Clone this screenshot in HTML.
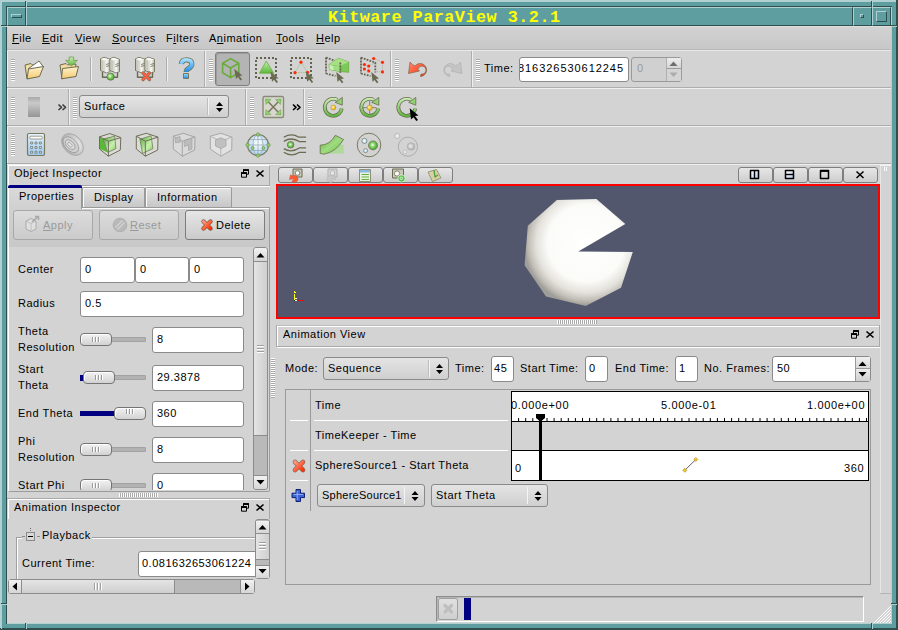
<!DOCTYPE html>
<html><head><meta charset="utf-8">
<style>
*{box-sizing:border-box;margin:0;padding:0}
html,body{width:898px;height:630px;overflow:hidden;background:#5f9ea0}
body{position:relative;font-family:"Liberation Sans",sans-serif;font-size:11px;letter-spacing:0.5px;color:#000}
.a{position:absolute}
.t{position:absolute;white-space:nowrap;line-height:14px}
/* generic bevels */
.lt{background:#b0d0d1}
.dk{background:#2f4f4f}
.g{background:#d3d3d3}
.hd{position:absolute;width:4px;background:repeating-linear-gradient(to bottom,#a9a9a9 0,#a9a9a9 1px,#fff 1px,#fff 2px)}
.vs{position:absolute;width:1px;background:#b5b5b5}
.edit{position:absolute;background:#fff;border:1px solid #8a8a8a;border-radius:3px}
.btn{position:absolute;border:1px solid #8a8a8a;border-radius:3px;background:linear-gradient(#e6e6e6,#cdcdcd)}
.combo{position:absolute;border:1px solid #8a8a8a;border-radius:3px;background:linear-gradient(#e4e4e4,#cfcfcf)}
</style></head><body>
<!-- ===== window frame ===== -->
<div class="a lt" style="left:0;top:0;width:898px;height:2px"></div>
<div class="a lt" style="left:0;top:0;width:2px;height:630px"></div>
<div class="a dk" style="left:896px;top:0;width:2px;height:630px"></div>
<div class="a dk" style="left:0;top:628px;width:898px;height:2px"></div>
<div class="a lt" style="left:1px;top:628px;width:1px;height:1px"></div>
<!-- inner bevel -->
<div class="a dk" style="left:6px;top:6px;width:886px;height:1px"></div>
<div class="a dk" style="left:6px;top:6px;width:1px;height:618px"></div>
<div class="a lt" style="left:891px;top:7px;width:1px;height:617px"></div>
<div class="a lt" style="left:7px;top:623px;width:885px;height:1px"></div>
<!-- corner notches -->
<div class="a dk" style="left:25px;top:1px;width:1px;height:6px"></div><div class="a lt" style="left:26px;top:1px;width:1px;height:6px"></div>
<div class="a dk" style="left:871px;top:1px;width:1px;height:6px"></div><div class="a lt" style="left:872px;top:1px;width:1px;height:6px"></div>
<div class="a dk" style="left:1px;top:25px;width:6px;height:1px"></div><div class="a lt" style="left:1px;top:26px;width:6px;height:1px"></div>
<div class="a dk" style="left:891px;top:25px;width:6px;height:1px"></div><div class="a lt" style="left:891px;top:26px;width:6px;height:1px"></div>
<div class="a dk" style="left:1px;top:603px;width:6px;height:1px"></div><div class="a lt" style="left:1px;top:604px;width:6px;height:1px"></div>
<div class="a dk" style="left:891px;top:603px;width:6px;height:1px"></div><div class="a lt" style="left:891px;top:604px;width:6px;height:1px"></div>
<div class="a dk" style="left:25px;top:623px;width:1px;height:6px"></div><div class="a lt" style="left:26px;top:623px;width:1px;height:6px"></div>
<div class="a dk" style="left:871px;top:623px;width:1px;height:6px"></div><div class="a lt" style="left:872px;top:623px;width:1px;height:6px"></div>
<!-- title bar -->
<div class="a" style="left:7px;top:7px;width:19px;height:19px;border-top:1px solid #b0d0d1;border-left:1px solid #b0d0d1;border-right:1px solid #2f4f4f;border-bottom:1px solid #2f4f4f"></div>
<div class="a" style="left:11px;top:14px;width:11px;height:4px;border-top:1px solid #b0d0d1;border-left:1px solid #b0d0d1;border-right:1px solid #2f4f4f;border-bottom:1px solid #2f4f4f"></div>
<div class="a" style="left:26px;top:7px;width:827px;height:19px;border-top:1px solid #b0d0d1;border-left:1px solid #b0d0d1;border-right:1px solid #2f4f4f;border-bottom:1px solid #2f4f4f"></div>
<div class="a" style="left:853px;top:7px;width:19px;height:19px;border-top:1px solid #b0d0d1;border-left:1px solid #b0d0d1;border-right:1px solid #2f4f4f;border-bottom:1px solid #2f4f4f"></div>
<div class="a" style="left:860px;top:14px;width:4px;height:4px;border-top:1px solid #b0d0d1;border-left:1px solid #b0d0d1;border-right:1px solid #2f4f4f;border-bottom:1px solid #2f4f4f"></div>
<div class="a" style="left:872px;top:7px;width:19px;height:19px;border-top:1px solid #b0d0d1;border-left:1px solid #b0d0d1;border-right:1px solid #2f4f4f;border-bottom:1px solid #2f4f4f"></div>
<div class="a" style="left:876px;top:11px;width:11px;height:11px;border-top:1px solid #b0d0d1;border-left:1px solid #b0d0d1;border-right:1px solid #2f4f4f;border-bottom:1px solid #2f4f4f"></div>
<div class="t" style="left:328px;top:9px;font-family:'Liberation Mono',monospace;font-weight:bold;font-size:16.8px;line-height:17px;color:#ffff00">Kitware ParaView 3.2.1</div>

<!-- ===== client area ===== -->
<div class="a g" style="left:7px;top:26px;width:884px;height:597px"></div>
<!-- menubar -->
<div class="a" style="left:7px;top:26px;width:884px;height:24px;background:linear-gradient(#d3d3d3,#c7c7c7)"></div>
<div class="a" style="left:7px;top:26px;width:884px;height:1px;background:#dedede"></div>
<div class="a" style="left:7px;top:49px;width:884px;height:1px;background:#b8b8b8"></div>
<div class="a" style="left:7px;top:50px;width:884px;height:1px;background:#e8e8e8"></div>
<div class="t" style="left:12px;top:31px"><u>F</u>ile</div>
<div class="t" style="left:42px;top:31px"><u>E</u>dit</div>
<div class="t" style="left:75px;top:31px"><u>V</u>iew</div>
<div class="t" style="left:112px;top:31px"><u>S</u>ources</div>
<div class="t" style="left:166px;top:31px">F<u>i</u>lters</div>
<div class="t" style="left:209px;top:31px">A<u>n</u>imation</div>
<div class="t" style="left:276px;top:31px"><u>T</u>ools</div>
<div class="t" style="left:316px;top:31px"><u>H</u>elp</div>

<!-- TOOLBARS -->
<div class="a" style="left:7px;top:87px;width:884px;height:1px;background:#adadad"></div>
<div class="a" style="left:7px;top:88px;width:884px;height:1px;background:#efefef"></div>
<div class="a" style="left:7px;top:125px;width:884px;height:1px;background:#adadad"></div>
<div class="a" style="left:7px;top:126px;width:884px;height:1px;background:#efefef"></div>
<div class="a" style="left:7px;top:163px;width:884px;height:1px;background:#adadad"></div>
<div class="a" style="left:7px;top:164px;width:884px;height:1px;background:#efefef"></div>
<div class="a" style="left:7px;top:51px;width:1px;height:36px;background:#efefef"></div>
<div class="a" style="left:7px;top:89px;width:1px;height:36px;background:#efefef"></div>
<div class="a" style="left:7px;top:127px;width:1px;height:36px;background:#efefef"></div>
<div class="a" style="left:204px;top:51px;width:1px;height:36px;background:#adadad"></div>
<div class="a" style="left:205px;top:51px;width:1px;height:36px;background:#efefef"></div>
<div class="a" style="left:390px;top:51px;width:1px;height:36px;background:#adadad"></div>
<div class="a" style="left:391px;top:51px;width:1px;height:36px;background:#efefef"></div>
<div class="a" style="left:471px;top:51px;width:1px;height:36px;background:#adadad"></div>
<div class="a" style="left:472px;top:51px;width:1px;height:36px;background:#efefef"></div>
<div class="a" style="left:68px;top:89px;width:1px;height:36px;background:#adadad"></div>
<div class="a" style="left:69px;top:89px;width:1px;height:36px;background:#efefef"></div>
<div class="a" style="left:245px;top:89px;width:1px;height:36px;background:#adadad"></div>
<div class="a" style="left:246px;top:89px;width:1px;height:36px;background:#efefef"></div>
<div class="a" style="left:303px;top:89px;width:1px;height:36px;background:#adadad"></div>
<div class="a" style="left:304px;top:89px;width:1px;height:36px;background:#efefef"></div>
<div class="hd" style="left:11px;top:59px;height:22px"></div>
<div class="hd" style="left:209px;top:59px;height:22px"></div>
<div class="hd" style="left:395px;top:59px;height:22px"></div>
<div class="hd" style="left:476px;top:59px;height:22px"></div>
<div class="hd" style="left:11px;top:97px;height:22px"></div>
<div class="hd" style="left:73px;top:97px;height:22px"></div>
<div class="hd" style="left:250px;top:97px;height:22px"></div>
<div class="hd" style="left:308px;top:97px;height:22px"></div>
<div class="hd" style="left:11px;top:134px;height:22px"></div>
<div class="a" style="left:90px;top:57px;width:1px;height:24px;background:#adadad"></div><div class="a" style="left:91px;top:57px;width:1px;height:24px;background:#f0f0f0"></div>
<div class="a" style="left:166px;top:57px;width:1px;height:24px;background:#adadad"></div><div class="a" style="left:167px;top:57px;width:1px;height:24px;background:#f0f0f0"></div>
<!-- selected button -->
<div class="a" style="left:215px;top:52px;width:35px;height:34px;border:1px solid #7e7e7e;border-radius:3px;background:#b4b4b4;box-shadow:inset 1px 1px 0 #9c9c9c"></div>
<div class="t" style="left:484px;top:61px">Time:</div>
<div class="edit" style="left:519px;top:57px;width:110px;height:25px;overflow:hidden"><div class="t" style="right:4px;top:3px;letter-spacing:0.95px">0.0816326530612245</div></div>
<div class="a" style="left:631px;top:57px;width:51px;height:25px;border:1px solid #9a9a9a;border-radius:3px;background:#d0d0d0"></div>
<div class="t" style="left:637px;top:61px;color:#9a9a9a">0</div>
<div class="a" style="left:666px;top:58px;width:15px;height:11px;background:linear-gradient(#ececec,#d6d6d6);border-left:1px solid #b0b0b0;border-bottom:1px solid #9a9a9a"></div>
<div class="a" style="left:666px;top:69px;width:15px;height:12px;background:#d4d4d4;border-left:1px solid #b0b0b0"></div>
<!-- row2 -->

<div class="combo" style="left:79px;top:95px;width:150px;height:23px"></div>
<div class="a" style="left:208px;top:98px;width:1px;height:17px;background:#f4f4f4"></div>
<div class="a" style="left:207px;top:98px;width:1px;height:17px;background:#bdbdbd"></div>
<div class="t" style="left:84px;top:99px">Surface</div>



<svg class="a" style="left:0;top:0" width="898" height="630" viewBox="0 0 898 630">
<defs>
<linearGradient id="gFold" x1="0" y1="0" x2="0" y2="1"><stop offset="0" stop-color="#fff3cf"/><stop offset="1" stop-color="#f6c96e"/></linearGradient>
<linearGradient id="gGrn" x1="0" y1="0" x2="0" y2="1"><stop offset="0" stop-color="#c5eeb0"/><stop offset="1" stop-color="#5cb83a"/></linearGradient>
<linearGradient id="gSrv" x1="0" y1="0" x2="1" y2="0"><stop offset="0" stop-color="#cfcfc8"/><stop offset="0.5" stop-color="#fafaf5"/><stop offset="1" stop-color="#bdbdb5"/></linearGradient>
<radialGradient id="gBall" cx="0.4" cy="0.4" r="0.6"><stop offset="0" stop-color="#e8ffe0"/><stop offset="0.5" stop-color="#7fd060"/><stop offset="1" stop-color="#4aa030"/></radialGradient>
<radialGradient id="gYel" cx="0.4" cy="0.4" r="0.6"><stop offset="0" stop-color="#fff6a0"/><stop offset="1" stop-color="#f0a800"/></radialGradient>
<linearGradient id="gRed" x1="0" y1="0" x2="1" y2="1"><stop offset="0" stop-color="#ff8a70"/><stop offset="1" stop-color="#ff2a00"/></linearGradient>
<linearGradient id="gHelp" x1="0" y1="0" x2="0" y2="1"><stop offset="0" stop-color="#9fdcff"/><stop offset="1" stop-color="#1a8ef0"/></linearGradient>
<linearGradient id="gGray" x1="0" y1="0" x2="0" y2="1"><stop offset="0" stop-color="#a9a9a9"/><stop offset="0.3" stop-color="#c9c9c9"/><stop offset="1" stop-color="#959595"/></linearGradient>
<linearGradient id="gRing" x1="0" y1="0" x2="0" y2="1"><stop offset="0" stop-color="#c8ecb0"/><stop offset="1" stop-color="#60b840"/></linearGradient>
</defs>
<g stroke-linejoin="round">
<!-- folder open -->
<path d="M25,65 L31,63.5 L32.5,65 L38,64 L37,70 L27,79 Z" fill="#f5dca0" stroke="#6b6b52" stroke-width="1"/>
<path d="M28.5,68.5 L39,61 L43.5,67 L30,70 Z" fill="#fff" stroke="#6b6b52" stroke-width="1"/>
<path d="M28.5,69 L43.5,66.5 L39.5,76.5 L27,79 Z" fill="url(#gFold)" stroke="#6b6b52" stroke-width="1"/>
<!-- folder import -->
<path d="M60,65 L66,63.5 L67.5,65 L76,64 L75,70 L62,79 Z" fill="#f5dca0" stroke="#6b6b52" stroke-width="1"/>
<path d="M62.5,68.5 L78.5,66.5 L76,76.5 L61.5,78.8 Z" fill="url(#gFold)" stroke="#6b6b52" stroke-width="1"/>
<path d="M69.2,57 L73.6,57 L73.6,60.4 L77.4,60.4 L71.4,66 L65.6,60.4 L69.2,60.4 Z" fill="url(#gGrn)" stroke="#6b8f4a" stroke-width="0.7"/>
<!-- servers connect -->
<g id="srv">
<path d="M102.5,72 L102.5,77.3 L117.5,77.3 L117.5,72" fill="none" stroke="#6b6b52" stroke-width="1.4"/>
<path d="M100.5,58.8 L104,57.3 L110,59.3 L110,71.5 L106.5,72.8 L100.5,70.5 Z" fill="#e8e8e0" stroke="#6b6b52" stroke-width="0.9"/>
<path d="M101,59 L104,57.8 L109.5,59.5 L106.5,60.8 Z" fill="#fafaf5"/>
<path d="M101,59.3 L103.5,60.5 L103.5,70.8 L101,69.8 Z" fill="#c8c8be"/>
<path d="M103.8,60.8 L109.6,59.8 L109.6,71.3 L106.5,72.4 L103.8,71 Z" fill="url(#gSrv)"/>
<path d="M110,58.8 L113.5,57.3 L119.5,59.3 L119.5,71.5 L116,72.8 L110,70.5 Z" fill="#e8e8e0" stroke="#6b6b52" stroke-width="0.9"/>
<path d="M110.5,59 L113.5,57.8 L119,59.5 L116,60.8 Z" fill="#fafaf5"/>
<path d="M110.5,59.3 L113,60.5 L113,70.8 L110.5,69.8 Z" fill="#c8c8be"/>
<path d="M113.3,60.8 L119.1,59.8 L119.1,71.3 L116,72.4 L113.3,71 Z" fill="url(#gSrv)"/>
<path d="M106,64.5 L109.5,63.5 M106,66.5 L109.5,65.5 M115.5,64.5 L119,63.5 M115.5,66.5 L119,65.5" stroke="#6b6b52" stroke-width="0.8"/>
</g>
<circle cx="110.6" cy="76.7" r="3.6" fill="url(#gBall)" stroke="#6b6b52" stroke-width="0.7"/>
<use href="#srv" x="35"/>
<path d="M143,73 L149.5,79.5 M149.5,73 L143,79.5" stroke="#8a6a58" stroke-width="3.2" stroke-linecap="round"/><path d="M143,73 L149.5,79.5 M149.5,73 L143,79.5" stroke="#ff6040" stroke-width="2" stroke-linecap="round"/>
<!-- help -->
<path d="M181.3,64 Q181.8,59.8 186.5,59.8 Q191.8,59.8 191.8,64 Q191.8,66.8 188.8,68.3 Q186.2,69.6 186.2,72" fill="none" stroke="#7a7658" stroke-width="5.2" stroke-linecap="butt"/>
<path d="M181.3,64 Q181.8,59.8 186.5,59.8 Q191.8,59.8 191.8,64 Q191.8,66.8 188.8,68.3 Q186.2,69.6 186.2,72" fill="none" stroke="url(#gHelp)" stroke-width="3.6" stroke-linecap="butt"/>
<rect x="183.5" y="73.5" width="5" height="5" fill="url(#gHelp)" stroke="#7a7658" stroke-width="1"/>
<!-- cube select -->
<path d="M230.6,58.6 L238.8,63.2 L238.8,72.8 L230.6,77.6 L222.6,72.8 L222.6,63.2 Z M222.6,63.2 L230.6,68 L238.8,63.2 M230.6,68 L230.6,77.6" fill="none" stroke="#6aac3c" stroke-width="1.6"/>
<path d="M234.2,68.8 L242.5,75.5 L239.5,76 L242,79.5 L240.5,80.5 L238,77 L236,79 Z" fill="#6b6b52"/>
<!-- triangle select -->
<path d="M256,58 H276 V78 H256 Z" fill="none" stroke="#62624e" stroke-width="2" stroke-dasharray="2 2"/>
<path d="M266.3,61 L273.6,73.2 L259.4,73.2 Z" fill="url(#gGrn)" stroke="#6aac3c" stroke-width="0.8"/>
<path d="M270.5,71.4 L278.6,78.2 L275.6,78.7 L278,82 L276.5,83 L274,79.7 L272,81.8 Z" fill="#6b6b52"/>
<!-- points select -->
<path d="M291,58 H311 V78 H291 Z" fill="none" stroke="#62624e" stroke-width="2" stroke-dasharray="2 2"/>
<path d="M301,62.2 L307.5,72.4 L295,72.6 Z" fill="none" stroke="#8cc070" stroke-width="0.8" stroke-dasharray="1.5 1"/>
<circle cx="301" cy="62.2" r="1.6" fill="#ff2a00"/><circle cx="295" cy="72.7" r="1.6" fill="#ff2a00"/><circle cx="307.5" cy="72.3" r="1.6" fill="#ff2a00"/>
<path d="M305.7,71.4 L313.8,78.2 L310.8,78.7 L313.2,82 L311.7,83 L309.2,79.7 L307.2,81.8 Z" fill="#6b6b52"/>
<!-- frustum select -->
<path d="M326,57.6 V73.5 M326,57.6 L340.3,62.6 V72.5 M326,73.5 L335.5,76" fill="none" stroke="#62624e" stroke-width="1.8" stroke-dasharray="1.8 1.2"/>
<path d="M329,64.5 L338.5,58.3 L348.7,62 L348.7,72.3 L340,71.5 L329.5,69.5 Z" fill="#7cc858" stroke="#6aac3c" stroke-width="0.8"/>
<path d="M329,64.5 L338.5,58.3 L348.7,62 L340,66 Z" fill="#a8e088"/>
<path d="M329.3,64.8 L333.8,66 L333.8,70.3 L329.5,69.5 Z" fill="#c8f0b0"/>
<path d="M333.8,66 L340,66 L340,71.5 L333.8,70.3 Z" fill="#a0dc80"/>
<path d="M340.3,62.6 V72.5" fill="none" stroke="#62624e" stroke-width="1.8" stroke-dasharray="1.8 1.2"/>
<path d="M336.3,72 L344,78.5 L341,79 L343.4,82.3 L341.9,83.3 L339.4,80 L337.6,82 Z" fill="#6b6b52"/>
<!-- frustum points -->
<path d="M361,57.6 V73.5 M361,57.6 L375.3,62.6 V72.5 M361,73.5 L370.5,76" fill="none" stroke="#62624e" stroke-width="1.8" stroke-dasharray="1.8 1.2"/>
<path d="M373.7,58.5 L382.5,62.3 V71.9 L375.3,71.5 M364.4,64.5 L368.7,66.1 L375.3,62.6" fill="none" stroke="#9a9a8a" stroke-width="0.7" stroke-dasharray="1 1"/>
<g fill="#ff2a00"><circle cx="373.7" cy="58.5" r="1.6"/><circle cx="382.5" cy="62.3" r="1.6"/><circle cx="382.5" cy="71.9" r="1.6"/><circle cx="364.4" cy="64.5" r="1.6"/><circle cx="368.7" cy="66.1" r="1.6"/><circle cx="364.4" cy="69" r="1.6"/><circle cx="368.7" cy="70.9" r="1.6"/></g>
<path d="M371.3,72 L379,78.5 L376,79 L378.4,82.3 L376.9,83.3 L374.4,80 L372.6,82 Z" fill="#6b6b52"/>
<!-- undo -->
<path d="M415,66 A6.5,6.5 0 1 1 420.5,76.5 L421,74 A4,4 0 1 0 418,69.5 L419.5,71 L408.5,73.5 L410,62 L412.5,64.5 Z" fill="url(#gRed)" stroke="#7a6a52" stroke-width="0.7"/>
<!-- redo gray -->
<path d="M455.5,66 A6.5,6.5 0 1 0 450,76.5 L449.5,74 A4,4 0 1 1 452.5,69.5 L451,71 L462,73.5 L460.5,62 L458,64.5 Z" fill="#c4c4c4" stroke="#b0b0b0" stroke-width="0.7"/>
<!-- spin arrows -->
<path d="M669.5,66 L673.5,61.5 L677.5,66 Z" fill="#6e6e6e"/>
<path d="M669.5,72.5 L673.5,77 L677.5,72.5 Z" fill="#ababab"/>
<!-- row2: slider icon -->
<rect x="28" y="97" width="12" height="20" fill="url(#gGray)"/>
<!-- combo arrows -->
<path d="M216,106 L219.5,102 L223,106 Z M216,108 L219.5,112 L223,108 Z" fill="#000"/>
<path d="M58.5,104.5 L61.5,107.3 L58.5,110 M62.5,104.5 L65.5,107.3 L62.5,110" fill="none" stroke="#404040" stroke-width="1.6"/>
<path d="M293,104.5 L296,107.3 L293,110 M297,104.5 L300,107.3 L297,110" fill="none" stroke="#000" stroke-width="1.6"/>
<!-- reset camera -->
<rect x="263" y="96.5" width="20.5" height="21" rx="1.5" fill="#d8d8d0" stroke="#8a8a78" stroke-width="1.4"/>
<path d="M266,99.5 L280.5,114.5 M280.5,99.5 L266,114.5" stroke="#7a7a62" stroke-width="1.6"/>
<path d="M265.5,99 L271,99.5 L266,104.5 Z M281,99 L275.5,99.5 L280.5,104.5 Z M265.5,115 L271,114.5 L266,109.5 Z M281,115 L275.5,114.5 L280.5,109.5 Z" fill="#8fd06a" stroke="#6a9a4a" stroke-width="0.5"/>
<!-- rotation icons -->
<g id="rot">
<path d="M341.7,108.5 A8.5,8.5 0 1 1 337.3,99.8" fill="none" stroke="#6b6b52" stroke-width="3.7"/>
<path d="M341.7,108.5 A8.5,8.5 0 1 1 337.3,99.8" fill="none" stroke="url(#gRing)" stroke-width="2.2"/>
<path d="M342.3,97.4 L342.3,105.2 L335.2,102.4 Z" fill="#90d070" stroke="#6b6b52" stroke-width="0.8"/>
</g>
<circle cx="333.3" cy="107.5" r="2.5" fill="url(#gYel)" stroke="#a08020" stroke-width="0.4"/>
<use href="#rot" x="36.5"/>
<path d="M369.7,101 V114.5 M363,107.7 H376.5" stroke="#7a7a62" stroke-width="0.9"/>
<circle cx="369.7" cy="107.7" r="2.6" fill="url(#gYel)" stroke="#a08020" stroke-width="0.4"/>
<use href="#rot" x="73.5"/>
<path d="M409.7,108.3 L418.5,115.5 L415,116 L418,120 L416.3,121 L413.5,117.2 L411,119.5 Z" fill="#000"/>
</g>
</svg>

<!-- LEFT DOCKS -->
<!-- Object Inspector title -->
<div class="a" style="left:8px;top:165px;width:262px;height:21px;border-top:1px solid #fff;border-left:1px solid #fff;border-right:1px solid #a8a8a8;border-bottom:1px solid #a8a8a8"></div>
<div class="a" style="left:8px;top:186px;width:262px;height:1px;background:#fff"></div>
<div class="t" style="left:14px;top:166px">Object Inspector</div>
<!-- tab pane -->
<div class="a" style="left:8px;top:207px;width:262px;height:285px;border-top:1px solid #9c9c9c;border-left:1px solid #fff;border-right:1px solid #9c9c9c;border-bottom:1px solid #9c9c9c;border-radius:0 0 2px 2px"></div>
<div class="a" style="left:9px;top:208px;width:260px;height:1px;background:#fff"></div>
<!-- tabs -->
<div class="a" style="left:82px;top:187px;width:63px;height:21px;border:1px solid #9a9a9a;border-bottom:none;border-radius:2px 2px 0 0;background:linear-gradient(#e2e2e2,#c6c6c6);box-shadow:inset 1px 1px 0 #fafafa"></div>
<div class="a" style="left:145px;top:187px;width:87px;height:21px;border:1px solid #9a9a9a;border-bottom:none;border-radius:2px 2px 0 0;background:linear-gradient(#e2e2e2,#c6c6c6);box-shadow:inset 1px 1px 0 #fafafa"></div>
<div class="a" style="left:82px;top:207px;width:150px;height:1px;background:#9a9a9a"></div>
<div class="a" style="left:8px;top:185px;width:74px;height:24px;border-left:1px solid #fff;border-right:1px solid #9a9a9a;background:linear-gradient(#dbdbdb,#d0d0d0)"></div>
<div class="a" style="left:8px;top:185px;width:74px;height:3px;background:#000080;border-radius:2px 2px 0 0"></div>
<div class="t" style="left:19px;top:189px">Properties</div>
<div class="t" style="left:94px;top:190px">Display</div>
<div class="t" style="left:157px;top:190px">Information</div>
<div class="a" style="left:9px;top:209px;width:260px;height:38px;background:linear-gradient(#d0d0d0,#c8c8c8)"></div>
<!-- buttons -->
<div class="btn" style="left:13px;top:210px;width:80px;height:30px;border-color:#a8a8a8;background:linear-gradient(#dcdcdc,#cbcbcb)"></div>
<div class="t" style="left:43px;top:218px;color:#9a9a9a"><u>A</u>pply</div>
<div class="btn" style="left:99px;top:210px;width:80px;height:30px;border-color:#a8a8a8;background:linear-gradient(#dcdcdc,#cbcbcb)"></div>
<div class="t" style="left:130px;top:218px;color:#9a9a9a"><u>R</u>eset</div>
<div class="btn" style="left:185px;top:210px;width:80px;height:30px;border-color:#7c7c7c;background:linear-gradient(#e6e6e6,#cbcbcb)"></div>
<div class="t" style="left:216px;top:218px">Delete</div>
<!-- scroll area content -->
<div class="t" style="left:18px;top:262px">Center</div>
<div class="edit" style="left:80px;top:257px;width:55px;height:26px"></div><div class="t" style="left:85px;top:262px">0</div>
<div class="edit" style="left:135px;top:257px;width:54px;height:26px"></div><div class="t" style="left:140px;top:262px">0</div>
<div class="edit" style="left:189px;top:257px;width:55px;height:26px"></div><div class="t" style="left:194px;top:262px">0</div>
<div class="t" style="left:18px;top:296px">Radius</div>
<div class="edit" style="left:80px;top:291px;width:164px;height:26px"></div><div class="t" style="left:85px;top:296px">0.5</div>

<div class="t" style="left:18px;top:323px;line-height:16px">Theta<br>Resolution</div>
<div class="a" style="left:111px;top:337px;width:35px;height:5px;background:#b2b2b2;border:1px solid #a2a2a2;border-radius:1px"></div>
<div class="btn" style="left:80px;top:333px;width:32px;height:13px;border-radius:4px;border-color:#747474;background:linear-gradient(#f2f2f2,#d2d2d2);box-shadow:inset 1px 1px 0 #fff"></div>
<div class="edit" style="left:152px;top:327px;width:92px;height:26px"></div><div class="t" style="left:157px;top:332px">8</div>

<div class="t" style="left:18px;top:361px;line-height:16px">Start<br>Theta</div>
<div class="a" style="left:80px;top:375px;width:4px;height:6px;background:#000080"></div>
<div class="a" style="left:114px;top:375px;width:32px;height:5px;background:#b2b2b2;border:1px solid #a2a2a2;border-radius:1px"></div>
<div class="btn" style="left:83px;top:371px;width:32px;height:13px;border-radius:4px;border-color:#747474;background:linear-gradient(#f2f2f2,#d2d2d2);box-shadow:inset 1px 1px 0 #fff"></div>
<div class="edit" style="left:152px;top:365px;width:92px;height:26px"></div><div class="t" style="left:157px;top:370px">29.3878</div>

<div class="t" style="left:18px;top:406px">End Theta</div>
<div class="a" style="left:80px;top:411px;width:35px;height:5px;background:#000080"></div>
<div class="btn" style="left:114px;top:407px;width:32px;height:13px;border-radius:4px;border-color:#747474;background:linear-gradient(#f2f2f2,#d2d2d2);box-shadow:inset 1px 1px 0 #fff"></div>
<div class="edit" style="left:152px;top:401px;width:92px;height:26px"></div><div class="t" style="left:157px;top:406px">360</div>

<div class="t" style="left:18px;top:433px;line-height:16px">Phi<br>Resolution</div>
<div class="a" style="left:111px;top:447px;width:35px;height:5px;background:#b2b2b2;border:1px solid #a2a2a2;border-radius:1px"></div>
<div class="btn" style="left:80px;top:443px;width:32px;height:13px;border-radius:4px;border-color:#747474;background:linear-gradient(#f2f2f2,#d2d2d2);box-shadow:inset 1px 1px 0 #fff"></div>
<div class="edit" style="left:152px;top:437px;width:92px;height:26px"></div><div class="t" style="left:157px;top:442px">8</div>

<div class="a" style="left:9px;top:470px;width:244px;height:20px;overflow:hidden">
<div class="t" style="left:9px;top:8px">Start Phi</div>
<div class="a" style="left:102px;top:13px;width:35px;height:5px;background:#b2b2b2;border:1px solid #a2a2a2;border-radius:1px"></div>
<div class="btn" style="left:71px;top:9px;width:32px;height:13px;border-radius:4px;border-color:#747474;background:linear-gradient(#f2f2f2,#d2d2d2);box-shadow:inset 1px 1px 0 #fff"></div>
<div class="edit" style="left:143px;top:3px;width:92px;height:26px"></div><div class="t" style="left:148px;top:8px">0</div>
</div>
<!-- vertical scrollbar -->
<div class="a" style="left:253px;top:247px;width:15px;height:243px;border:1px solid #8c8c8c;border-radius:3px;background:#b9b9b9"></div>
<div class="a" style="left:254px;top:261px;width:13px;height:175px;background:linear-gradient(to right,#e4e4e4,#cfcfcf);border-bottom:1px solid #8c8c8c;border-top:1px solid #8c8c8c"></div>
<div class="a" style="left:254px;top:248px;width:13px;height:13px;background:linear-gradient(#f2f2f2,#d6d6d6);border-radius:2px 2px 0 0"></div>
<div class="a" style="left:254px;top:475px;width:13px;height:14px;background:linear-gradient(#f2f2f2,#d6d6d6);border-top:1px solid #8c8c8c;border-radius:0 0 2px 2px"></div>
<!-- splitter grip -->
<div class="a" style="left:119px;top:493px;width:39px;height:4px;background:repeating-linear-gradient(to right,#fff 0,#fff 1px,#a9a9a9 1px,#a9a9a9 2px)"></div>

<!-- Animation Inspector -->
<div class="a" style="left:8px;top:499px;width:262px;height:20px;border-top:1px solid #fff;border-left:1px solid #fff"></div>
<div class="t" style="left:14px;top:500px">Animation Inspector</div>
<div class="a" style="left:16px;top:537px;width:240px;height:1px;background:#a0a0a0"></div>
<div class="a" style="left:16px;top:538px;width:240px;height:1px;background:#fff"></div>
<div class="a" style="left:16px;top:537px;width:1px;height:42px;background:#a0a0a0"></div>
<div class="a" style="left:17px;top:538px;width:1px;height:41px;background:#fff"></div>
<div class="a" style="left:22px;top:531px;width:70px;height:12px;background:#d3d3d3"></div>
<div class="a" style="left:26px;top:532px;width:9px;height:9px;border:1px solid #8a8a8a;background:#d8d8d8"></div>
<div class="a" style="left:28px;top:536px;width:5px;height:1px;background:#000"></div>
<div class="a" style="left:22px;top:536px;width:3px;height:1px;background:#888"></div><div class="a" style="left:37px;top:536px;width:3px;height:1px;background:#888"></div><div class="a" style="left:30px;top:528px;width:1px;height:1px;background:#666"></div><div class="a" style="left:30px;top:530px;width:1px;height:1px;background:#888"></div>
<div class="t" style="left:42px;top:528px">Playback</div>
<div class="t" style="left:22px;top:556px">Current Time:</div>
<div class="a" style="left:138px;top:551px;width:118px;height:26px;overflow:hidden"><div class="edit" style="left:0;top:0;width:140px;height:26px"></div><div class="t" style="left:4px;top:5px">0.081632653061224</div></div>
<!-- anim v scrollbar -->
<div class="a" style="left:255px;top:519px;width:15px;height:60px;border:1px solid #8c8c8c;border-radius:3px;background:#b9b9b9"></div>
<div class="a" style="left:256px;top:533px;width:13px;height:27px;background:linear-gradient(to right,#e4e4e4,#cfcfcf);border-bottom:1px solid #8c8c8c;border-top:1px solid #8c8c8c"></div>
<div class="a" style="left:256px;top:521px;width:13px;height:12px;background:linear-gradient(#f2f2f2,#d6d6d6)"></div>
<div class="a" style="left:256px;top:565px;width:13px;height:13px;background:linear-gradient(#f2f2f2,#d6d6d6);border-top:1px solid #8c8c8c"></div>
<!-- anim h scrollbar -->
<div class="a" style="left:8px;top:579px;width:247px;height:15px;border:1px solid #8c8c8c;border-radius:3px;background:#b9b9b9"></div>
<div class="a" style="left:21px;top:580px;width:154px;height:13px;background:linear-gradient(#e4e4e4,#cfcfcf);border-left:1px solid #8c8c8c;border-right:1px solid #8c8c8c"></div>
<div class="a" style="left:9px;top:580px;width:12px;height:13px;background:linear-gradient(#f2f2f2,#d6d6d6)"></div>
<div class="a" style="left:240px;top:580px;width:14px;height:13px;background:linear-gradient(#f2f2f2,#d6d6d6);border-left:1px solid #8c8c8c"></div>


<!-- VIEW -->
<!-- dock separators -->
<div class="a" style="left:269px;top:498px;width:1px;height:21px;background:#a8a8a8"></div>
<div class="a" style="left:7px;top:498px;width:263px;height:1px;background:#a8a8a8"></div>
<div class="a" style="left:880px;top:165px;width:1px;height:428px;background:#e6e6e6"></div>
<div class="a" style="left:880px;top:165px;width:11px;height:1px;background:#f2f2f2"></div>
<div class="a" style="left:880px;top:593px;width:11px;height:1px;background:#b4b4b4"></div>
<!-- view toolbar buttons -->
<div class="btn" style="left:278px;top:167px;width:35px;height:16px;border-color:#7e7e7e"></div>
<div class="btn" style="left:313px;top:167px;width:35px;height:16px;border-color:#7e7e7e"></div>
<div class="btn" style="left:348px;top:167px;width:35px;height:16px;border-color:#7e7e7e"></div>
<div class="btn" style="left:383px;top:167px;width:35px;height:16px;border-color:#7e7e7e"></div>
<div class="btn" style="left:418px;top:167px;width:35px;height:16px;border-color:#7e7e7e"></div>
<div class="btn" style="left:738px;top:167px;width:35px;height:16px;border-color:#7e7e7e"></div>
<div class="btn" style="left:773px;top:167px;width:35px;height:16px;border-color:#7e7e7e"></div>
<div class="btn" style="left:808px;top:167px;width:35px;height:16px;border-color:#7e7e7e"></div>
<div class="btn" style="left:843px;top:167px;width:35px;height:16px;border-color:#7e7e7e"></div>
<!-- render view -->
<div class="a" style="left:276px;top:184px;width:604px;height:135px;border:2px solid #ff0000;background:#52576e"></div>
<!-- splitter grip -->
<div class="a" style="left:557px;top:320px;width:40px;height:4px;background:repeating-linear-gradient(to right,#fff 0,#fff 1px,#a9a9a9 1px,#a9a9a9 2px)"></div>


<!-- ANIMATION VIEW -->
<!-- Animation View -->
<div class="a" style="left:276px;top:325px;width:603px;height:22px;border-top:1px solid #bcbcbc;border-left:1px solid #a8a8a8"></div>
<div class="a" style="left:277px;top:326px;width:603px;height:22px;border:1px solid #fff;border-right:none"></div>
<div class="a" style="left:277px;top:346px;width:602px;height:1px;background:#a8a8a8"></div>
<div class="a" style="left:879px;top:325px;width:1px;height:22px;background:#a8a8a8"></div>
<div class="t" style="left:283px;top:327px">Animation View</div>
<div class="hd" style="left:271px;top:358px;height:40px;background:repeating-linear-gradient(to bottom,#fff 0,#fff 1px,#a9a9a9 1px,#a9a9a9 2px)"></div>
<div class="t" style="left:285px;top:361px">Mode:</div>
<div class="combo" style="left:323px;top:357px;width:126px;height:23px"></div>
<div class="a" style="left:428px;top:360px;width:1px;height:17px;background:#bdbdbd"></div>
<div class="a" style="left:429px;top:360px;width:1px;height:17px;background:#f4f4f4"></div>
<div class="t" style="left:328px;top:361px">Sequence</div>
<div class="t" style="left:455px;top:361px">Time:</div>
<div class="edit" style="left:491px;top:356px;width:23px;height:26px"></div><div class="t" style="left:494px;top:361px;letter-spacing:0.65px">45</div>
<div class="t" style="left:520px;top:361px">Start Time:</div>
<div class="edit" style="left:585px;top:356px;width:23px;height:26px"></div><div class="t" style="left:589px;top:361px">0</div>
<div class="t" style="left:615px;top:361px">End Time:</div>
<div class="edit" style="left:675px;top:356px;width:23px;height:26px"></div><div class="t" style="left:679px;top:361px">1</div>
<div class="t" style="left:704px;top:361px">No. Frames:</div>
<div class="edit" style="left:772px;top:356px;width:99px;height:26px"></div><div class="t" style="left:777px;top:361px">50</div>
<div class="a" style="left:855px;top:357px;width:15px;height:12px;background:linear-gradient(#f0f0f0,#d8d8d8);border-left:1px solid #9a9a9a;border-bottom:1px solid #9a9a9a"></div>
<div class="a" style="left:855px;top:369px;width:15px;height:12px;background:linear-gradient(#ececec,#d0d0d0);border-left:1px solid #9a9a9a"></div>
<!-- table frame -->
<div class="a" style="left:285px;top:389px;width:586px;height:196px;border:1px solid #9a9a9a"></div>
<div class="a" style="left:310px;top:390px;width:1px;height:121px;background:#9a9a9a"></div>
<div class="a" style="left:290px;top:420px;width:18px;height:1px;background:#fff"></div>
<div class="a" style="left:290px;top:450px;width:18px;height:1px;background:#fff"></div>
<div class="a" style="left:290px;top:480px;width:18px;height:1px;background:#fff"></div>
<div class="a" style="left:314px;top:420px;width:194px;height:1px;background:#fff"></div>
<div class="a" style="left:314px;top:450px;width:194px;height:1px;background:#fff"></div>
<div class="t" style="left:315px;top:398px">Time</div>
<div class="t" style="left:315px;top:428px">TimeKeeper - Time</div>
<div class="t" style="left:315px;top:458px">SphereSource1 - Start Theta</div>
<!-- ruler / tracks -->
<div class="a" style="left:511px;top:391px;width:358px;height:90px;border:1px solid #000;background:#fff"></div>
<div class="a" style="left:512px;top:421px;width:356px;height:1px;background:#000"></div>
<div class="a" style="left:512px;top:422px;width:356px;height:28px;background:#d3d3d3"></div>
<div class="a" style="left:512px;top:450px;width:356px;height:1px;background:#000"></div>
<div class="t" style="left:511px;top:398px;letter-spacing:0.65px">0.000e+00</div>
<div class="t" style="left:661px;top:398px;letter-spacing:0.65px">5.000e-01</div>
<div class="t" style="left:807px;top:398px;letter-spacing:0.65px">1.000e+00</div>
<div class="t" style="left:515px;top:461px">0</div>
<div class="t" style="left:844px;top:461px;letter-spacing:0.65px">360</div>
<div class="a" style="left:539px;top:417px;width:3px;height:63px;background:#000"></div>
<!-- combos -->
<div class="combo" style="left:317px;top:484px;width:108px;height:23px"></div>
<div class="a" style="left:404px;top:487px;width:1px;height:17px;background:#f4f4f4"></div>
<div class="a" style="left:318px;top:486px;width:86px;height:19px;overflow:hidden"><div class="t" style="left:4px;top:2px;letter-spacing:0.25px">SphereSource1</div></div>
<div class="combo" style="left:431px;top:484px;width:117px;height:23px"></div>
<div class="a" style="left:527px;top:487px;width:1px;height:17px;background:#f4f4f4"></div>
<div class="t" style="left:436px;top:488px">Start Theta</div>
<!-- status bar progress -->
<div class="a" style="left:436px;top:596px;width:428px;height:26px;border:1px solid #fff;border-top-color:#8c8c8c;border-left-color:#8c8c8c;box-shadow:inset 1px 1px 0 #b5b5b5"></div>
<div class="a" style="left:438px;top:598px;width:20px;height:22px;border:1px solid #a0a0a0;border-radius:2px;background:linear-gradient(#e0e0e0,#cfcfcf)"></div>
<div class="a" style="left:464px;top:598px;width:7px;height:22px;background:#000080"></div>


<svg class="a" style="left:0;top:0" width="898" height="630" viewBox="0 0 898 630">
<defs>
<linearGradient id="gCalc" x1="0" y1="0" x2="0" y2="1"><stop offset="0" stop-color="#e8f4ff"/><stop offset="1" stop-color="#9cc8f0"/></linearGradient>
<radialGradient id="gDisc" cx="0.6" cy="0.35" r="0.7"><stop offset="0" stop-color="#f4f4f4"/><stop offset="1" stop-color="#a8a8a8"/></radialGradient>
<linearGradient id="gCubeG" x1="0" y1="0" x2="1" y2="1"><stop offset="0" stop-color="#4ea830"/><stop offset="0.6" stop-color="#c8f0b0"/><stop offset="1" stop-color="#7cc858"/></linearGradient>
<radialGradient id="gGlobe" cx="0.5" cy="0.4" r="0.6"><stop offset="0" stop-color="#ffffff"/><stop offset="1" stop-color="#a8d0f0"/></radialGradient>
<linearGradient id="gWarp" x1="0" y1="0" x2="1" y2="1"><stop offset="0" stop-color="#50b030"/><stop offset="0.5" stop-color="#a0dc80"/><stop offset="1" stop-color="#60c040"/></linearGradient>
<radialGradient id="gBall2" cx="0.45" cy="0.45" r="0.6"><stop offset="0" stop-color="#f0fff0"/><stop offset="0.45" stop-color="#80d060"/><stop offset="1" stop-color="#3c9828"/></radialGradient>
<radialGradient id="gBlue" cx="0.45" cy="0.45" r="0.6"><stop offset="0" stop-color="#ffffff"/><stop offset="1" stop-color="#a0d0f8"/></radialGradient>
<radialGradient id="gGBall" cx="0.45" cy="0.45" r="0.6"><stop offset="0" stop-color="#f0f0f0"/><stop offset="1" stop-color="#a0a0a0"/></radialGradient>
<radialGradient id="gSph" gradientUnits="userSpaceOnUse" cx="586" cy="243" r="62"><stop offset="0" stop-color="#ffffff"/><stop offset="0.62" stop-color="#fbfbf8"/><stop offset="0.8" stop-color="#e4e2dc"/><stop offset="0.92" stop-color="#c2c0b8"/><stop offset="1" stop-color="#a09e98"/></radialGradient>
<linearGradient id="gWin" x1="0" y1="0" x2="1" y2="1"><stop offset="0" stop-color="#ffffff"/><stop offset="1" stop-color="#b8c8f0"/></linearGradient>
</defs>
<g stroke-linejoin="round">
<!-- ===== row3 ===== -->
<!-- calculator -->
<rect x="27.5" y="133.5" width="17" height="22" rx="1.5" fill="url(#gCalc)" stroke="#7a7a60" stroke-width="1.2"/>
<rect x="29.8" y="136.2" width="12.5" height="2.8" rx="1" fill="#fff" stroke="#7a7a60" stroke-width="0.7"/>
<g fill="#d8e8f4" stroke="#6a6a58" stroke-width="0.7">
<rect x="30.6" y="142" width="2" height="2"/><rect x="35" y="142" width="2" height="2"/><rect x="39.4" y="142" width="2" height="2"/>
<rect x="30.6" y="146.5" width="2" height="2"/><rect x="35" y="146.5" width="2" height="2"/><rect x="39.4" y="146.5" width="2" height="2"/>
<rect x="30.6" y="151.2" width="2" height="2"/><rect x="35" y="151.2" width="2" height="2"/><rect x="39.4" y="151.2" width="2" height="2"/>
</g>
<!-- contour disc -->
<g transform="rotate(45 72.5 144.5)">
<ellipse cx="72.5" cy="144.5" rx="12.5" ry="9" fill="url(#gDisc)" stroke="#a8a8a8" stroke-width="0.9"/>
<ellipse cx="71.5" cy="145.8" rx="9.5" ry="6" fill="#d0d0d0" stroke="#9c9c9c" stroke-width="0.9"/>
<ellipse cx="71" cy="146.3" rx="6" ry="3.6" fill="#d8d8d8" stroke="#a0a0a0" stroke-width="0.9"/>
<ellipse cx="70.8" cy="146.5" rx="2.8" ry="1.6" fill="#e0e0e0" stroke="#a8a8a8" stroke-width="0.8"/>
</g>
<!-- clip cube -->
<path d="M99.5,136.8 L109.8,133.6 L120.8,137.6 L120.3,150 L108.4,156.2 L99.5,149 Z" fill="#dcdcd6" stroke="#6e6e58" stroke-width="1"/>
<path d="M100,137.5 L103.1,139 L107.9,152.4 L100,149 Z" fill="#5cb83a"/>
<path d="M103.1,139 L114.6,136.2 L116,148.6 L107.9,152.4 Z" fill="url(#gCubeG)" stroke="#6e6e58" stroke-width="0.7"/>
<path d="M99.5,136.8 L108.4,141.2 L120.8,137.6 M108.4,141.2 V156.2" fill="none" stroke="#6e6e58" stroke-width="1"/>
<!-- slice -->
<path d="M136.3,136.2 L146.3,133.3 L158,137.1 L157.7,150 L145.3,156.2 L136.3,149 Z" fill="#dcdcd6" stroke="#6e6e58" stroke-width="1"/>
<path d="M139.9,139.3 L151,135.7 L153,148.6 L142.5,153.3 Z" fill="url(#gCubeG)" stroke="#6e6e58" stroke-width="0.7"/>
<path d="M136.3,136.2 L145.3,141.2 L158,137.1 M145.3,141.2 V156.2" fill="none" stroke="#6e6e58" stroke-width="1"/>
<!-- threshold gray -->
<path d="M173.3,136.2 L183.3,133.3 L195,137.1 L194.7,150 L182.3,156.2 L173.3,149 Z" fill="#dadada" stroke="#a4a4a4" stroke-width="1"/>
<path d="M173.3,136.2 L182.3,141.2 L195,137.1 M182.3,141.2 V156.2" fill="none" stroke="#a4a4a4" stroke-width="1"/>
<path d="M175,138 L180,136.5 L180.5,142 L175.5,143 Z" fill="#bcbcbc" stroke="#a0a0a0" stroke-width="0.6"/>
<path d="M184,140.5 L192,138 L192,149 L188.5,150.5 L188.5,145 L184.5,146.5 Z" fill="#bcbcbc" stroke="#a0a0a0" stroke-width="0.6"/>
<!-- extract gray cube -->
<path d="M210.3,136.2 L220.8,133.3 L232,137.1 L231.7,150 L220.8,156.2 L210.3,149 Z" fill="#e2e2e2" stroke="#a8a8a8" stroke-width="1"/>
<path d="M210.3,136.2 L220.8,141.2 L232,137.1 M220.8,141.2 V156.2" fill="none" stroke="#b0b0b0" stroke-width="0.9"/>
<path d="M215.5,140 L220.8,137.8 L226,140 L226,146 L220.8,148.5 L215.5,146 Z" fill="#c0c0c0" stroke="#a0a0a0" stroke-width="0.7"/>
<!-- glyph sphere -->
<circle cx="258" cy="145" r="10.5" fill="url(#gGlobe)" stroke="#7a7a60" stroke-width="1.2"/>
<path d="M248,145 H268 M250,139.5 H266 M250,150.5 H266 M258,134.5 V155.5" fill="none" stroke="#8a9aa0" stroke-width="0.6"/>
<ellipse cx="258" cy="145" rx="5" ry="10.5" fill="none" stroke="#8a9aa0" stroke-width="0.6"/>
<g fill="#8fd06a" stroke="#6a8a4a" stroke-width="0.6">
<circle cx="258" cy="134.5" r="1.7"/><circle cx="258" cy="155.5" r="1.7"/><circle cx="247.5" cy="145" r="1.7"/><circle cx="268.5" cy="145" r="1.7"/><circle cx="252.5" cy="148" r="1.5"/><circle cx="263.5" cy="148" r="1.5"/>
</g>
<!-- stream tracer -->
<path d="M283.8,137.2 Q291.4,132.5 298.9,137.2 H306.1 M283.8,141.4 Q291.4,136.5 299.7,141.7 H306.1 M283.8,148.6 Q291.4,153.5 299.7,147.8 H306.1 M283.8,152.3 Q291.4,157.5 299.7,152.3 H306.1" fill="none" stroke="#6b6b52" stroke-width="1.3"/>
<circle cx="290.6" cy="144.8" r="3.3" fill="url(#gBall2)" stroke="#6b6b52" stroke-width="0.7"/>
<!-- warp -->
<rect x="320.2" y="144.8" width="23.4" height="8.7" fill="#a8d890" opacity="0.85"/>
<path d="M320.2,145.2 Q330,145 335.3,135.3 L343.6,139.5 Q336,152 323.9,154.2 L320.2,153.5 Z" fill="url(#gWarp)" stroke="#6b6b52" stroke-width="0.8"/>
<!-- group -->
<circle cx="369" cy="145" r="11.8" fill="none" stroke="#7a7a60" stroke-width="1"/>
<circle cx="373" cy="145.4" r="4.5" fill="url(#gBall2)" stroke="#6b6b52" stroke-width="0.7"/>
<circle cx="364.4" cy="140.9" r="2.6" fill="url(#gBlue)" stroke="#7a7a60" stroke-width="0.7"/>
<circle cx="365.6" cy="150.7" r="2" fill="url(#gBlue)" stroke="#7a7a60" stroke-width="0.7"/>
<!-- ungroup gray -->
<circle cx="397.2" cy="136" r="2.6" fill="#e8e8e8" stroke="#b0b0b0" stroke-width="0.8"/>
<circle cx="407.9" cy="146.7" r="9.6" fill="none" stroke="#a8a8a8" stroke-width="0.9"/>
<circle cx="411" cy="146.5" r="3.8" fill="url(#gGBall)" stroke="#b0b0b0" stroke-width="0.6"/>
<circle cx="405" cy="151.9" r="1.8" fill="#e8e8e8" stroke="#b0b0b0" stroke-width="0.6"/>

<!-- ===== view toolbar icons ===== -->
<rect x="293" y="169" width="9" height="8" fill="#c8c8b8" stroke="#6b6b52" stroke-width="1"/>
<circle cx="297.5" cy="173" r="2.3" fill="#fff" stroke="#6b6b52" stroke-width="0.8"/>
<path d="M292,181.5 A3.5,3.5 0 1 0 292.5,176 L290.5,174.8 L289.5,179.5 L294,178.5 Z" fill="#ff5a30" stroke="#c05030" stroke-width="0.5"/>
<rect x="328" y="169" width="9" height="8" fill="#d4d4d4" stroke="#b0b0b0" stroke-width="1"/>
<circle cx="332.5" cy="173" r="2.3" fill="#e8e8e8" stroke="#b0b0b0" stroke-width="0.8"/>
<path d="M333,181.5 A3.5,3.5 0 1 1 332.5,176 L334.5,174.8 L335.5,179.5 L331,178.5 Z" fill="#c8c8c8" stroke="#b0b0b0" stroke-width="0.5"/>
<rect x="359.5" y="169.5" width="11" height="12" fill="#e8f4e0" stroke="#7a7a60" stroke-width="0.8"/>
<rect x="360" y="170" width="10" height="2.5" fill="#8ab8e8"/>
<path d="M361.5,174.5 H369 M361.5,177 H369 M361.5,179.5 H369" stroke="#60b040" stroke-width="1"/>
<rect x="392.5" y="169" width="11" height="9" fill="#c8c8b8" stroke="#6b6b52" stroke-width="1"/>
<circle cx="397" cy="173.5" r="2.6" fill="#fff" stroke="#6b6b52" stroke-width="0.8"/>
<circle cx="401.5" cy="178.5" r="3.6" fill="#50c040" stroke="#fff" stroke-width="0.6"/>
<circle cx="401.3" cy="178.3" r="1.3" fill="none" stroke="#fff" stroke-width="0.8"/>
<path d="M428,172 L436.5,169.5 L441,178 L432.5,181.5 Z" fill="#d8d0a0" stroke="#8a8a70" stroke-width="0.8"/>
<path d="M434,170 L435,177 L438,175" fill="none" stroke="#50a040" stroke-width="1.4"/>
<!-- right view buttons -->
<rect x="750.5" y="170.5" width="8" height="8" fill="url(#gWin)" stroke="#000" stroke-width="1.5"/><path d="M754.5,170.5 V178.5" stroke="#000" stroke-width="1.4"/>
<rect x="785.5" y="170.5" width="8" height="8" fill="url(#gWin)" stroke="#000" stroke-width="1.5"/><path d="M785.5,174.5 H793.5" stroke="#000" stroke-width="1.4"/>
<rect x="820.5" y="170.5" width="8" height="8" fill="none" stroke="#000" stroke-width="1.5"/><path d="M820.5,171.2 H828.5" stroke="#000" stroke-width="1.4"/>
<path d="M856.5,171.5 L863.5,178 M863.5,171.5 L856.5,178" stroke="#000" stroke-width="1.5"/>

<!-- ===== dock buttons ===== -->
<g id="dockbtn">
<rect x="243.5" y="169.7" width="5" height="4.5" fill="none" stroke="#000" stroke-width="1"/><rect x="243" y="169.2" width="6" height="1.8" fill="#000"/>
<rect x="241.5" y="172.7" width="5" height="4.5" fill="#d3d3d3" stroke="#000" stroke-width="1"/><rect x="241" y="172.2" width="6" height="1.8" fill="#000"/>
<path d="M256.5,170.5 L263.5,176.5 M263.5,170.5 L256.5,176.5" stroke="#000" stroke-width="1.6"/>
</g>
<use href="#dockbtn" y="334"/>
<use href="#dockbtn" x="610" y="161"/>

<!-- ===== render view sphere ===== -->
<path d="M556.8,200 L596.4,199 L625.3,224 L578.2,251.4 L632.8,252 L621,287.8 L585.7,306 L546,296.4 L524.6,265.3 L527.8,225.7 Z" fill="url(#gSph)"/>
<rect x="294" y="291" width="1" height="2" fill="#ffff00"/><rect x="295" y="292" width="1" height="1" fill="#ffffff"/>
<rect x="294" y="294" width="1" height="6" fill="#ffff00"/><rect x="295" y="298" width="2" height="1" fill="#ffffff"/>
<rect x="294" y="300" width="1" height="1" fill="#004000"/><rect x="295" y="300" width="2" height="1" fill="#ffffff"/>
<rect x="297" y="300" width="4" height="1" fill="#ff0000"/><rect x="302" y="300" width="2" height="1" fill="#ff0000"/>
</g>
</svg>

<svg class="a" style="left:0;top:0" width="898" height="630" viewBox="0 0 898 630">
<g stroke-linejoin="round">
<!-- ruler ticks -->
<path d="M511.5,418 V421 M518.6,418 V421 M525.7,418 V421 M532.8,418 V421 M539.9,418 V421 M547.0,418 V421 M554.1,418 V421 M561.2,418 V421 M568.3,418 V421 M575.4,418 V421 M582.5,418 V421 M589.6,418 V421 M596.7,418 V421 M603.8,418 V421 M610.9,418 V421 M618.0,418 V421 M625.1,418 V421 M632.2,418 V421 M639.3,418 V421 M646.4,418 V421 M653.5,418 V421 M660.6,418 V421 M667.7,418 V421 M674.8,418 V421 M681.9,418 V421 M689.0,418 V421 M696.1,418 V421 M703.2,418 V421 M710.3,418 V421 M717.4,418 V421 M724.5,418 V421 M731.6,418 V421 M738.7,418 V421 M745.8,418 V421 M752.9,418 V421 M760.0,418 V421 M767.1,418 V421 M774.2,418 V421 M781.3,418 V421 M788.4,418 V421 M795.5,418 V421 M802.6,418 V421 M809.7,418 V421 M816.8,418 V421 M823.9,418 V421 M831.0,418 V421 M838.1,418 V421 M845.2,418 V421 M852.3,418 V421 M859.4,418 V421 M866.5,418 V421 " stroke="#000" stroke-width="1"/>
<!-- marker head -->
<path d="M536,414 H545 V418 L542,420.5 V422 H539 V420.5 L536,418 Z" fill="#000"/>
<!-- keyframe -->
<path d="M684.8,470.3 L695.8,459.5" stroke="#606050" stroke-width="1"/>
<path d="M684.8,468.3 L686.8,470.3 L684.8,472.3 L682.8,470.3 Z M695.8,457.5 L697.8,459.5 L695.8,461.5 L693.8,459.5 Z" fill="#f8c820" stroke="#a08020" stroke-width="0.6"/>
<!-- red X -->
<path d="M295,462 L303,470 M303,462 L295,470" stroke="#8a6a58" stroke-width="4.6" stroke-linecap="round"/>
<path d="M295,462 L303,470 M303,462 L295,470" stroke="url(#gRedX)" stroke-width="3.2" stroke-linecap="round"/>
<!-- blue plus -->
<path d="M296,489.5 H300.5 V493.2 H304.5 V497.6 H300.5 V501.5 H296 V497.6 H292 V493.2 H296 Z" fill="#3c64d8" stroke="#102070" stroke-width="1"/>
<path d="M297.2,491 V500 M293.5,494.5 H303" stroke="#9cbcff" stroke-width="0.8"/>
<!-- combo arrows -->
<path d="M436,368 L439.5,364 L443,368 Z M436,370 L439.5,374 L443,370 Z" fill="#000"/>
<path d="M411.5,495 L415,491 L418.5,495 Z M411.5,497 L415,501 L418.5,497 Z" fill="#000"/>
<path d="M534.5,495 L538,491 L541.5,495 Z M534.5,497 L538,501 L541.5,497 Z" fill="#000"/>
<!-- no frames spin arrows -->
<path d="M858.5,366 L862.5,361.5 L866.5,366 Z M858.5,372 L862.5,376.5 L866.5,372 Z" fill="#000"/>
<!-- status X -->
<path d="M445,605.5 L451.5,612 M451.5,605.5 L445,612" stroke="#bfbfbf" stroke-width="3.2" stroke-linecap="round"/>
<!-- size grip -->
<path d="M874,623 L891,606 M877,623 L891,609 M880,623 L891,612 M883,623 L891,615 M886,623 L891,618 M889,623 L891,621" stroke="#fff" stroke-width="1"/>
<!-- scroll arrows -->
<path d="M256.5,257.5 L260.5,253 L264.5,257.5 Z" fill="#000"/>
<path d="M256.5,480 L260.5,484.5 L264.5,480 Z" fill="#000"/>
<path d="M258.5,529.5 L262.5,525 L266.5,529.5 Z" fill="#000"/>
<path d="M258.5,569 L262.5,573.5 L266.5,569 Z" fill="#000"/>
<path d="M17,582.5 L12.5,586.5 L17,590.5 Z" fill="#000"/>
<path d="M245,582.5 L249.5,586.5 L245,590.5 Z" fill="#000"/>
<!-- ridges -->
<path d="M257,345.5 H264 M257,348.5 H264 M257,351.5 H264" stroke="#a0a0a0" stroke-width="1"/>
<path d="M257,346.5 H264 M257,349.5 H264 M257,352.5 H264" stroke="#fff" stroke-width="1"/>
<path d="M259,542.5 H266 M259,545.5 H266 M259,548.5 H266" stroke="#a0a0a0" stroke-width="1"/>
<path d="M259,543.5 H266 M259,546.5 H266 M259,549.5 H266" stroke="#fff" stroke-width="1"/>
<path d="M94.5,583 V590 M97.5,583 V590 M100.5,583 V590" stroke="#a0a0a0" stroke-width="1"/>
<path d="M95.5,583 V590 M98.5,583 V590 M101.5,583 V590" stroke="#fff" stroke-width="1"/>
</g>
</svg>

<svg class="a" style="left:0;top:0" width="898" height="630" viewBox="0 0 898 630">
<defs><linearGradient id="gRedX" x1="0" y1="0" x2="1" y2="1"><stop offset="0" stop-color="#ff9a80"/><stop offset="1" stop-color="#ff3000"/></linearGradient></defs>
<g stroke-linejoin="round">
<path d="M92.5,337 V342 M95.5,337 V342 M98.5,337 V342" stroke="#9a9a9a" stroke-width="1"/><path d="M93.5,337 V342 M96.5,337 V342 M99.5,337 V342" stroke="#fff" stroke-width="1"/>
<path d="M95.5,375 V380 M98.5,375 V380 M101.5,375 V380" stroke="#9a9a9a" stroke-width="1"/><path d="M96.5,375 V380 M99.5,375 V380 M102.5,375 V380" stroke="#fff" stroke-width="1"/>
<path d="M126.5,409 V414 M129.5,409 V414 M132.5,409 V414" stroke="#9a9a9a" stroke-width="1"/><path d="M127.5,409 V414 M130.5,409 V414 M133.5,409 V414" stroke="#fff" stroke-width="1"/>
<path d="M92.5,447 V452 M95.5,447 V452 M98.5,447 V452" stroke="#9a9a9a" stroke-width="1"/><path d="M93.5,447 V452 M96.5,447 V452 M99.5,447 V452" stroke="#fff" stroke-width="1"/>
<path d="M92.5,483 V488 M95.5,483 V488 M98.5,483 V488" stroke="#9a9a9a" stroke-width="1"/><path d="M93.5,483 V488 M96.5,483 V488 M99.5,483 V488" stroke="#fff" stroke-width="1"/>
<!-- apply icon (disabled) -->
<path d="M26,221 L31,218.5 L36,221 L36,229 L31,231.5 L26,229 Z" fill="#e0e0e0" stroke="#ababab" stroke-width="1"/>
<path d="M26,221 L31,223.5 L36,221 M31,223.5 V231.5" fill="none" stroke="#b5b5b5" stroke-width="0.8"/>
<path d="M32,222 L38,216.5 M35,216.5 H38.5 V220" fill="none" stroke="#a8a8a8" stroke-width="1.5"/>
<!-- reset icon -->
<circle cx="120" cy="225" r="6.8" fill="#b9b9b9" stroke="#a9a9a9" stroke-width="0.8"/>
<path d="M115.5,227.5 L122.5,220.5 M117.5,229.5 L124.5,222.5" stroke="#d4d4d4" stroke-width="1.3"/>
<!-- delete icon -->
<path d="M203.5,221.5 L210.5,228.5 M210.5,221.5 L203.5,228.5" stroke="#7a5a48" stroke-width="4.4" stroke-linecap="round"/>
<path d="M203.5,221.5 L210.5,228.5 M210.5,221.5 L203.5,228.5" stroke="url(#gRedX)" stroke-width="3" stroke-linecap="round"/>
<!-- right dock grip -->
<path d="M884.5,167 V171 M886.5,167 V171" stroke="#fff" stroke-width="1"/>
</g></svg>

<!-- STATUS -->
<div id="status"></div>
</body></html>
